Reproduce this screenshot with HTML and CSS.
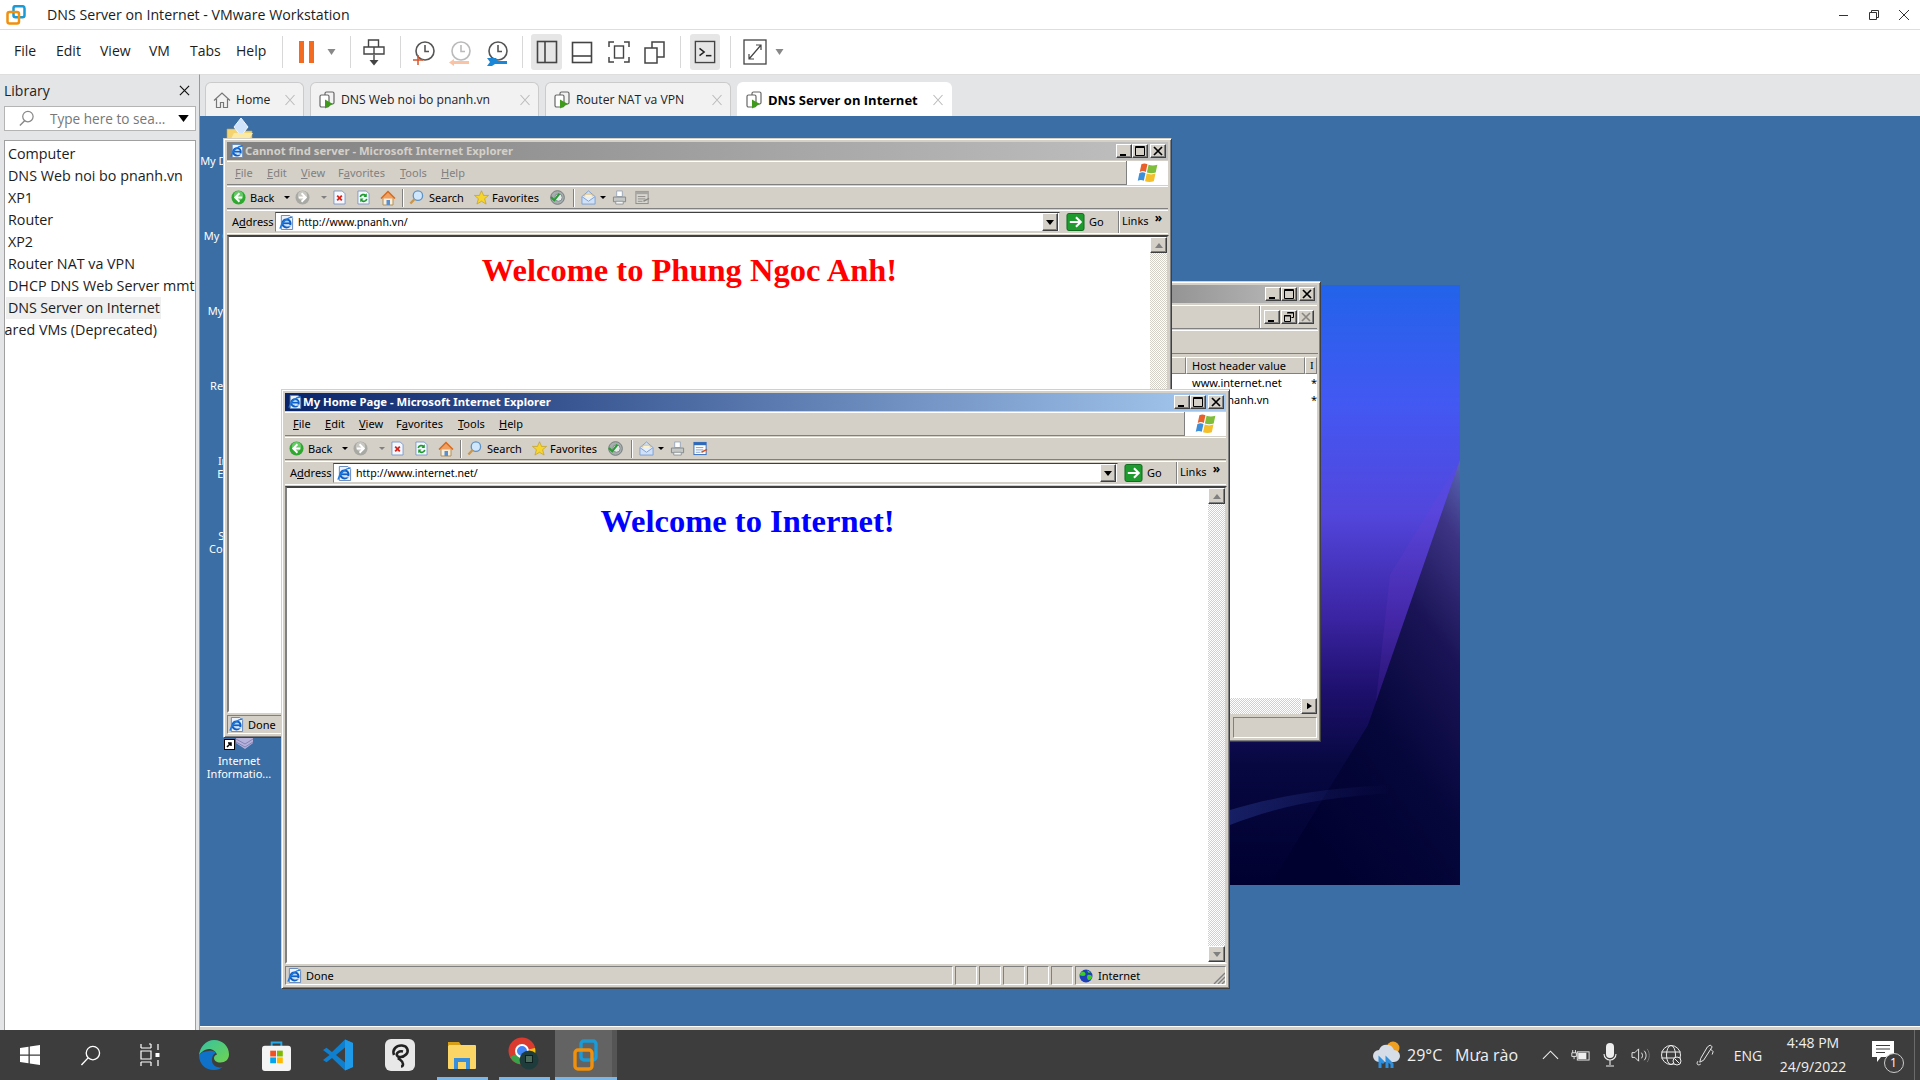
FILE: index.html
```
<!DOCTYPE html>
<html lang="en">
<head>
<meta charset="utf-8">
<title>DNS Server on Internet - VMware Workstation</title>
<link rel="stylesheet" href="styles.css">
</head>
<body>
<svg class="defs" width="0" height="0" aria-hidden="true">
  <defs>
    <symbol id="ie" viewBox="0 0 16 16"><path d="M2.500 .5h9l3 3v12h-12z" fill="#eef3fb" stroke="#5f83b5"/><circle cx="8" cy="9" r="4.300" fill="#bcd8f7" stroke="#0f5fc4" stroke-width="2.200"/><path d="M4 8.800h8" stroke="#0f5fc4" stroke-width="1.700"/><path d="M8 11.500h5" stroke="#eef3fb" stroke-width="1.200"/><path d="M1 14.500C2.500 8 9 2.500 14.500 2" fill="none" stroke="#1f78dc" stroke-width="1.500"/></symbol>
    <symbol id="back" viewBox="0 0 16 16"><circle cx="8" cy="8" r="7.500" fill="#2fa82f"/><circle cx="8" cy="6" r="5" fill="#8fe08f" opacity=".6"/><path d="M9 3.500 4.500 8 9 12.500M5 8h7" fill="none" stroke="#fff" stroke-width="2"/></symbol>
    <symbol id="fwd" viewBox="0 0 16 16"><circle cx="8" cy="8" r="7.500" fill="#a9a9a4"/><circle cx="8" cy="6" r="5" fill="#dedcd6" opacity=".6"/><path d="M7 3.500 11.500 8 7 12.500M11 8H4" fill="none" stroke="#fff" stroke-width="2"/></symbol>
    <symbol id="stop" viewBox="0 0 14 16"><path d="M1 1h9l3 3v11H1z" fill="#f5f8ff" stroke="#7d97c4"/><path d="M4.500 6l5 5m0-5-5 5" stroke="#d8261c" stroke-width="2"/></symbol>
    <symbol id="refresh" viewBox="0 0 14 16"><path d="M1 1h9l3 3v11H1z" fill="#f5f8ff" stroke="#7d97c4"/><path d="M3.500 7.500a3.500 3.500 0 0 1 6-1.500M10.500 9.500a3.500 3.500 0 0 1-6 1.500" fill="none" stroke="#1c9a2e" stroke-width="1.800"/><path d="M10.500 3.500v4h-3.500zM3.500 13v-4h3.500z" fill="#1c9a2e"/></symbol>
    <symbol id="home" viewBox="0 0 16 16"><path d="M3 8v7h10V8" fill="#f8eeda" stroke="#b09060"/><path d="M1 8.500 8 1.500l7 7" fill="#f0a060" stroke="#d56b1f" stroke-width="1.500"/><rect x="6.500" y="10" width="3.500" height="5" fill="#5a8fd0"/></symbol>
    <symbol id="search" viewBox="0 0 16 16"><circle cx="9.500" cy="6" r="5" fill="#cfe6fb" stroke="#5f93c4" stroke-width="1.400"/><path d="M6 9.500 1.500 14.500" stroke="#c9964a" stroke-width="2.400"/></symbol>
    <symbol id="star" viewBox="0 0 16 16"><path d="M8 .8l2.200 5h5.300l-4.200 3.500 1.600 5.700L8 12l-4.900 3 1.600-5.700L.5 5.800h5.300z" fill="#f7d52f" stroke="#bf9a20" stroke-width=".7"/></symbol>
    <symbol id="media" viewBox="0 0 16 16"><circle cx="8" cy="8" r="7.300" fill="#a8adad" stroke="#6f7a7a"/><circle cx="9" cy="8" r="4" fill="#e6eaea" stroke="#7c8a8a"/><path d="M1 7.500 4.500 11 10 4" fill="none" stroke="#2a9a36" stroke-width="2.200"/></symbol>
    <symbol id="mail" viewBox="0 0 16 16"><path d="M1 7l7-6 7 6v8H1z" fill="#cfe0f7" stroke="#7d9fd0"/><path d="M4 4.500h8V9H4z" fill="#fff4c8" stroke="#d0a860" stroke-width=".6"/><path d="M1 7l7 5 7-5" fill="#e6effc" stroke="#7d9fd0"/></symbol>
    <symbol id="print" viewBox="0 0 16 16"><path d="M5 1h6v6H5z" fill="#fff" stroke="#9aa8bb"/><path d="M1.500 7.500h13v5h-13z" fill="#c6c8c8" stroke="#808688"/><path d="M4 12h8v3H4z" fill="#f4f4f4" stroke="#909698"/></symbol>
    <symbol id="edit" viewBox="0 0 16 16"><rect x="1" y="1.500" width="13" height="13" fill="#fff" stroke="#2f68b8"/><path d="M1 1.500h13V4.500H1z" fill="#2f68b8"/><path d="M3 7h8M3 9.500h8M3 12h5" stroke="#7d9fd0"/><path d="M9 12l6-3" stroke="#d8501c" stroke-width="1.500"/></symbol>
    <symbol id="editoff" viewBox="0 0 16 16"><rect x="1" y="1.500" width="13" height="13" fill="#d8d6d0" stroke="#8c8a86"/><path d="M1 1.500h13V4.500H1z" fill="#a8a6a2"/><path d="M3 7h8M3 9.500h8M3 12h5" stroke="#8c8a86"/><path d="M9 12l6-3" stroke="#8c8a86" stroke-width="1.500"/></symbol>
    <symbol id="go" viewBox="0 0 19 19"><rect x=".5" y=".5" width="18" height="18" rx="2" fill="#1f9a2f" stroke="#0c6a18"/><path d="M3.500 9.500h11M10 4.500l5 5-5 5" fill="none" stroke="#fff" stroke-width="2.200"/></symbol>
    <symbol id="flag" viewBox="0 0 20 18"><path d="M4 1c2-1 3.500-1 5.500 0L8 8C6 7 4.500 7 2.500 8z" fill="#e8602a"/><path d="M10.500 1.500c2.500 1 5 1 8 0L17 8.500c-2.500 1-5.500 1-8 0z" fill="#7fbe3a"/><path d="M2.200 9c2-1 3.500-1 5.500 0L6.200 16c-2-1-3.500-1-5.500 0z" fill="#3d8fdc"/><path d="M8.800 9.500c2.500 1 5.500 1 8 0l-1.500 7c-2.500 1-5.500 1-8 0z" fill="#f4bf2a"/></symbol>
    <symbol id="wmin" viewBox="0 0 10 10"><path d="M1 8h6v2H1z" fill="#000"/></symbol>
    <symbol id="wmax" viewBox="0 0 10 10"><path d="M.5 1.500h9v8h-9zM.5 .5h9v1h-9z" fill="none" stroke="#000"/></symbol>
    <symbol id="wclose" viewBox="0 0 10 10"><path d="M1 1l8 8m0-8-8 8" stroke="#000" stroke-width="1.700"/></symbol>
    <symbol id="wrestore" viewBox="0 0 10 10"><path d="M3.500 .5h6v5h-2M.5 3.500h6v6h-6z" fill="none" stroke="#000"/><path d="M3 1h7M0 4h7" stroke="#000"/></symbol>
    <symbol id="vmtab" viewBox="0 0 18 18"><rect x="7" y="1" width="9" height="12" rx="1.500" fill="none" stroke="#666" stroke-width="1.200"/><rect x="2" y="4" width="9" height="12" rx="1.500" fill="#fff" stroke="#666" stroke-width="1.200"/><path d="M7 8.500l8 4.500-8 4.500z" fill="#3f9a1c"/></symbol>
    <symbol id="tabx" viewBox="0 0 12 12"><path d="M1.500 1 10.500 11m0-10L1.500 11" stroke="currentColor" stroke-width="1.100" fill="none"/></symbol>
    <symbol id="clock" viewBox="0 0 24 24"><circle cx="13" cy="11" r="9" fill="none" stroke="#555" stroke-width="1.600"/><path d="M13 5v6.500h4" fill="none" stroke="#555" stroke-width="1.600"/></symbol>
    <symbol id="earth" viewBox="0 0 14 14"><circle cx="7" cy="7" r="6.500" fill="#1f3fb8"/><path d="M3 2.500c2 0 4 1 3.500 3S3 7 1.500 6.500 2 3 3 2.500zM9 6c2-.5 4 .5 4 2s-2 3.500-3.500 3S7.500 6.500 9 6z" fill="#3ecb2c"/><path d="M8 1.500c1.500 0 3 1 3.500 2L9.500 4z" fill="#3ecb2c"/></symbol>
  </defs>
</svg>

<div class="app">
  <header class="titlebar">
    <svg class="vmlogo" viewBox="0 0 20 20" width="20" height="20"><rect x="7.500" y="1.200" width="11" height="11" rx="2" fill="none" stroke="#1b9ad6" stroke-width="2.500"/><rect x="1.500" y="7" width="11.500" height="11.500" rx="2" fill="none" stroke="#f0900c" stroke-width="2.500"/></svg>
    <span class="titletext">DNS Server on Internet - VMware Workstation</span>
    <div class="wincontrols">
      <svg viewBox="0 0 12 12" width="12" height="12"><path d="M1 6.500h9" stroke="#333"/></svg>
      <svg viewBox="0 0 12 12" width="12" height="12"><path d="M1.500 3.500h7v7h-7zM3.500 3.500v-2h7v7h-2" fill="none" stroke="#333"/></svg>
      <svg viewBox="0 0 12 12" width="12" height="12"><path d="M1 1l10 10m0-10L1 11" stroke="#333"/></svg>
    </div>
  </header>

  <nav class="menubar">
    <div class="mainmenu"><span>File</span><span>Edit</span><span>View</span><span>VM</span><span>Tabs</span><span>Help</span></div>
    <div class="mainbar">
      <i class="vsep"></i>
      <svg viewBox="0 0 16 22" width="16" height="22"><rect width="5" height="22" fill="#f26b21"/><rect x="10" width="5" height="22" fill="#f26b21"/></svg>
      <svg class="drop" viewBox="0 0 8 6" width="9" height="6"><path d="M0 0h8L4 6z" fill="#888"/></svg>
      <i class="vsep"></i>
      <svg viewBox="0 0 24 28" width="24" height="28"><path d="M6.500 2h10v7h-10zM2 9h10v7H2zM12 9h10v7H12z" fill="none" stroke="#444" stroke-width="1.400"/><path d="M12 17v7" stroke="#444" stroke-width="1.400"/><path d="M7.500 22h9L12 27.500z" fill="#444"/></svg>
      <i class="vsep"></i>
      <svg viewBox="0 0 24 28" width="24" height="28"><use href="#clock"/><path d="M1 22h10M6 17v10" stroke="#d9542a" stroke-width="1.500"/></svg>
      <svg viewBox="0 0 24 28" width="24" height="28" class="dim"><use href="#clock"/><path d="M3 23h18v3H3z" fill="#f26b21"/><path d="M1 24.500 6 21v7z" fill="#f26b21"/></svg>
      <svg viewBox="0 0 24 28" width="24" height="28"><use href="#clock"/><path d="M2 20h9l2 3h9v3H10l-3 2H2l3-4z" fill="#1b86d6"/></svg>
      <i class="vsep"></i>
      <span class="selbox"><svg viewBox="0 0 24 24" width="24" height="24"><rect x="2.500" y="1.500" width="19" height="21" fill="none" stroke="#444" stroke-width="1.600"/><path d="M10 1.500v21" stroke="#444" stroke-width="1.600"/></svg></span>
      <svg viewBox="0 0 24 24" width="24" height="24"><rect x="2.500" y="2.500" width="19" height="20" fill="none" stroke="#444" stroke-width="1.600"/><path d="M2.500 16h19" stroke="#444" stroke-width="1.600"/></svg>
      <svg viewBox="0 0 24 24" width="24" height="24"><path d="M2 7V2h5M17 2h5v5M2 17v5h5M17 22h5v-5" fill="none" stroke="#444" stroke-width="1.500"/><rect x="7.500" y="6" width="9" height="12" fill="none" stroke="#444" stroke-width="1.400"/></svg>
      <svg viewBox="0 0 24 24" width="24" height="24"><rect x="2" y="8" width="12" height="15" fill="none" stroke="#444" stroke-width="1.500"/><path d="M9 8V2h12v15h-7" fill="none" stroke="#444" stroke-width="1.500"/></svg>
      <i class="vsep"></i>
      <span class="selbox term"><svg viewBox="0 0 24 26" width="22" height="26"><rect x="1.500" y="1.500" width="21" height="23" fill="none" stroke="#444" stroke-width="1.500"/><path d="M6 9l5 4-5 4" fill="none" stroke="#222" stroke-width="1.700"/><path d="M13 17h6" stroke="#222" stroke-width="1.700"/></svg></span>
      <i class="vsep"></i>
      <svg viewBox="0 0 24 26" width="24" height="26"><rect x="1" y="1" width="22" height="24" fill="none" stroke="#444" stroke-width="1.300"/><path d="M6 20 18 6M13 6h5v5M6 15v5h5" fill="none" stroke="#444" stroke-width="1.200"/></svg>
      <svg class="drop" viewBox="0 0 8 6" width="9" height="6"><path d="M0 0h8L4 6z" fill="#888"/></svg>
    </div>
  </nav>

  <div class="main">
    <aside class="library">
      <div class="libhead"><span>Library</span><svg viewBox="0 0 12 12" width="11" height="11"><path d="M1 1l10 10m0-10L1 11" stroke="#111" stroke-width="1.300"/></svg></div>
      <div class="libsearch">
        <svg viewBox="0 0 18 18" width="17" height="17"><circle cx="10.500" cy="7" r="5.500" fill="none" stroke="#888" stroke-width="1.300"/><path d="M7 11.500 2 16.500" stroke="#888" stroke-width="1.500"/></svg>
        <span class="placeholder">Type here to sea...</span>
        <svg class="libdrop" viewBox="0 0 12 8" width="11" height="7"><path d="M0 0h12L6 8z" fill="#000"/></svg>
      </div>
      <ul class="tree">
        <li>Computer</li>
        <li>DNS Web noi bo pnanh.vn</li>
        <li>XP1</li>
        <li>Router</li>
        <li>XP2</li>
        <li>Router NAT va VPN</li>
        <li>DHCP DNS Web Server mmt</li>
        <li class="selected"><span>DNS Server on Internet</span></li>
        <li class="clipped">Shared VMs (Deprecated)</li>
      </ul>
    </aside>

    <section class="vmpane">
      <div class="tabs">
        <div class="tab t-home"><svg viewBox="0 0 18 18" width="18" height="18"><path d="M1 9.500 9 2l8 7.500M3.500 8v8.500h4v-5h3v5h4V8" fill="none" stroke="#777" stroke-width="1.200"/></svg><span>Home</span><svg class="tabx" width="12" height="12"><use href="#tabx"/></svg></div>
        <div class="tab t-web"><svg width="18" height="18"><use href="#vmtab"/></svg><span>DNS Web noi bo pnanh.vn</span><svg class="tabx" width="12" height="12"><use href="#tabx"/></svg></div>
        <div class="tab t-router"><svg width="18" height="18"><use href="#vmtab"/></svg><span>Router NAT va VPN</span><svg class="tabx" width="12" height="12"><use href="#tabx"/></svg></div>
        <div class="tab t-dns active"><svg width="18" height="18"><use href="#vmtab"/></svg><span>DNS Server on Internet</span><svg class="tabx" width="12" height="12"><use href="#tabx"/></svg></div>
      </div>

      <div class="screen">
        <div class="desktop-icons">
          <div class="dicon"><div class="di-img"><svg class="di-docs" viewBox="0 0 28 21" width="28" height="21"><path d="M1 11h9l2 2h14v8H1z" fill="#f4d470" stroke="#c8a040" stroke-width=".6"/><path d="M15 0l7 9-7 9-7-9z" fill="#cfe4fb" stroke="#eef6ff"/><path d="M5 21l3-6h19l-4 6z" fill="#fbe9a6"/></svg></div><span>My Documents</span></div>
          <div class="dicon"><div class="di-img"></div><span>My Computer</span></div>
          <div class="dicon"><div class="di-img"></div><span>My Network<br>Places</span></div>
          <div class="dicon"><div class="di-img"></div><span>Recycle Bin</span></div>
          <div class="dicon"><div class="di-img"></div><span>Internet<br>Explorer</span></div>
          <div class="dicon"><div class="di-img"></div><span>Security<br>Configura...</span></div>
          <div class="dicon"></div>
          <div class="dicon"></div>
          <div class="dicon"><div class="di-img di-iis"><svg viewBox="0 0 30 14" width="30" height="14"><path d="M12 0h17v7l-8 6-9-6z" fill="#b5b3dc"/><path d="M12 3l9 5 8-5M12 6l9 5 8-5" fill="none" stroke="#8583b5"/><rect x=".5" y="3.500" width="10" height="10" fill="#fff" stroke="#000"/><path d="M3 11l4-4M4 7h3v3" fill="none" stroke="#000" stroke-width="1.500"/></svg></div><span>Internet<br>Informatio...</span></div>
        </div>

        <div class="wallpaper">
          <svg viewBox="0 0 360 600" width="360" height="600" preserveAspectRatio="none">
            <defs>
              <linearGradient id="wpbase" x1="0" y1="0" x2="0" y2="1"><stop offset="0" stop-color="#2263ea"/><stop offset=".2" stop-color="#4358f2"/><stop offset=".38" stop-color="#5246dc"/><stop offset=".55" stop-color="#3c25a4"/><stop offset=".68" stop-color="#1c0f6b"/><stop offset=".8" stop-color="#070840"/><stop offset="1" stop-color="#000030"/></linearGradient>
              <linearGradient id="wpwedge" x1="1" y1="0" x2=".4" y2="1"><stop offset="0" stop-color="#5868b4"/><stop offset=".14" stop-color="#3d3484"/><stop offset=".36" stop-color="#1a1456"/><stop offset=".65" stop-color="#05063a"/><stop offset="1" stop-color="#010130"/></linearGradient>
              <linearGradient id="wpband" x1="0" y1="0" x2="1" y2="0"><stop offset="0" stop-color="#2a3a90"/><stop offset="1" stop-color="#2a3a90" stop-opacity="0"/></linearGradient>
            </defs>
            <rect width="360" height="600" fill="url(#wpbase)"/>
            <path d="M290 290 360 175V300L270 470z" fill="#8a45d8" opacity=".12"/>
            <path d="M360 175V600H170L268 440z" fill="url(#wpwedge)"/>
            <path d="M130 525C180 510 230 503 290 500V508C230 512 180 520 130 540z" fill="url(#wpband)" opacity=".5"/>
          </svg>
        </div>

        <!-- IIS manager window, mostly hidden -->
        <div class="xpwin iis">
          <div class="wintitle inactive"><span class="tt-text"></span><div class="wbtns"><span class="wbtn"><svg width="10" height="10"><use href="#wmin"/></svg></span><span class="wbtn"><svg width="10" height="10"><use href="#wmax"/></svg></span><span class="wbtn"><svg width="10" height="10"><use href="#wclose"/></svg></span></div></div>
          <div class="iis-menu bar"><div class="fill"></div><div class="mdibtns"><span class="wbtn"><svg width="10" height="10"><use href="#wmin"/></svg></span><span class="wbtn"><svg width="10" height="10"><use href="#wrestore"/></svg></span><span class="wbtn off"><svg width="10" height="10"><use href="#wclose"/></svg></span></div></div>
          <div class="iis-tool bar"></div>
          <div class="iis-list">
            <div class="listhead"><span class="lh c1"></span><span class="lh c2">Host header value</span><span class="lh c3">I</span></div>
            <div class="listrow"><span class="c1"></span><span class="c2">www.internet.net</span><span class="c3">*</span></div>
            <div class="listrow"><span class="c1"></span><span class="c2">www.pnanh.vn</span><span class="c3">*</span></div>
            <div class="listfill"></div>
            <div class="hscroll"><span class="arrowbtn"><svg viewBox="0 0 6 8" width="5" height="8"><path d="M0 0l6 4-6 4z" fill="#000"/></svg></span></div>
          </div>
          <div class="iis-status"><span class="sunken"></span></div>
        </div>

        <!-- Back browser -->
        <div class="xpwin ie w-back">
          <div class="wintitle inactive"><svg class="tt-icon" width="14" height="14"><use href="#ie"/></svg><span class="tt-text">Cannot find server - Microsoft Internet Explorer</span><div class="wbtns"><span class="wbtn"><svg width="10" height="10"><use href="#wmin"/></svg></span><span class="wbtn"><svg width="10" height="10"><use href="#wmax"/></svg></span><span class="wbtn"><svg width="10" height="10"><use href="#wclose"/></svg></span></div></div>
          <div class="iemenu bar disabled"><div class="iemenu-items"><span><u>F</u>ile</span><span><u>E</u>dit</span><span><u>V</u>iew</span><span>F<u>a</u>vorites</span><span><u>T</u>ools</span><span><u>H</u>elp</span></div><div class="brand"><svg width="22" height="20"><use href="#flag"/></svg></div></div>
          <div class="ietool bar">
            <svg width="15" height="15"><use href="#back"/></svg><span>Back</span><i class="tri"></i><svg width="15" height="15"><use href="#fwd"/></svg><i class="tri off"></i><svg width="13" height="15"><use href="#stop"/></svg><svg width="13" height="15"><use href="#refresh"/></svg><svg width="16" height="16"><use href="#home"/></svg><i class="tsep"></i><svg width="15" height="15"><use href="#search"/></svg><span>Search</span><svg width="15" height="15"><use href="#star"/></svg><span>Favorites</span><svg width="15" height="15"><use href="#media"/></svg><i class="tsep"></i><svg width="15" height="15"><use href="#mail"/></svg><i class="tri"></i><svg width="15" height="15"><use href="#print"/></svg><svg width="15" height="15"><use href="#editoff"/></svg>
          </div>
          <div class="ieaddr">
            <span class="addrlabel">A<u>d</u>dress</span>
            <div class="addrfield"><svg width="15" height="15"><use href="#ie"/></svg><span class="url">http://www.pnanh.vn/</span><span class="arrowbtn dd"><svg viewBox="0 0 8 5" width="8" height="5"><path d="M0 0h8L4 5z" fill="#000"/></svg></span></div>
            <div class="gobox"><svg width="19" height="18"><use href="#go"/></svg><span>Go</span></div>
            <div class="linksbox"><span>Links</span><b>»</b></div>
          </div>
          <div class="iecontent">
            <div class="page"><h1 class="red">Welcome to Phung Ngoc Anh!</h1></div>
            <div class="vscroll"><span class="arrowbtn up"><svg viewBox="0 0 8 5" width="8" height="5"><path d="M4 0l4 5H0z" fill="#808080"/></svg></span><span class="arrowbtn down"><svg viewBox="0 0 8 5" width="8" height="5"><path d="M0 0h8L4 5z" fill="#808080"/></svg></span></div>
          </div>
          <div class="iestatus"><div class="st-main"><svg width="15" height="15"><use href="#ie"/></svg><span>Done</span></div><i class="st"></i><i class="st"></i><i class="st"></i><i class="st"></i><i class="st"></i><div class="st-zone"><svg width="14" height="14"><use href="#earth"/></svg><span>Internet</span></div></div>
        </div>

        <!-- Front browser -->
        <div class="xpwin ie w-front">
          <div class="wintitle"><svg class="tt-icon" width="14" height="14"><use href="#ie"/></svg><span class="tt-text">My Home Page - Microsoft Internet Explorer</span><div class="wbtns"><span class="wbtn"><svg width="10" height="10"><use href="#wmin"/></svg></span><span class="wbtn"><svg width="10" height="10"><use href="#wmax"/></svg></span><span class="wbtn"><svg width="10" height="10"><use href="#wclose"/></svg></span></div></div>
          <div class="iemenu bar"><div class="iemenu-items"><span><u>F</u>ile</span><span><u>E</u>dit</span><span><u>V</u>iew</span><span>F<u>a</u>vorites</span><span><u>T</u>ools</span><span><u>H</u>elp</span></div><div class="brand"><svg width="22" height="20"><use href="#flag"/></svg></div></div>
          <div class="ietool bar">
            <svg width="15" height="15"><use href="#back"/></svg><span>Back</span><i class="tri"></i><svg width="15" height="15"><use href="#fwd"/></svg><i class="tri off"></i><svg width="13" height="15"><use href="#stop"/></svg><svg width="13" height="15"><use href="#refresh"/></svg><svg width="16" height="16"><use href="#home"/></svg><i class="tsep"></i><svg width="15" height="15"><use href="#search"/></svg><span>Search</span><svg width="15" height="15"><use href="#star"/></svg><span>Favorites</span><svg width="15" height="15"><use href="#media"/></svg><i class="tsep"></i><svg width="15" height="15"><use href="#mail"/></svg><i class="tri"></i><svg width="15" height="15"><use href="#print"/></svg><svg width="15" height="15"><use href="#edit"/></svg>
          </div>
          <div class="ieaddr">
            <span class="addrlabel">A<u>d</u>dress</span>
            <div class="addrfield"><svg width="15" height="15"><use href="#ie"/></svg><span class="url">http://www.internet.net/</span><span class="arrowbtn dd"><svg viewBox="0 0 8 5" width="8" height="5"><path d="M0 0h8L4 5z" fill="#000"/></svg></span></div>
            <div class="gobox"><svg width="19" height="18"><use href="#go"/></svg><span>Go</span></div>
            <div class="linksbox"><span>Links</span><b>»</b></div>
          </div>
          <div class="iecontent">
            <div class="page"><h1 class="blue">Welcome to Internet!</h1></div>
            <div class="vscroll"><span class="arrowbtn up"><svg viewBox="0 0 8 5" width="8" height="5"><path d="M4 0l4 5H0z" fill="#808080"/></svg></span><span class="arrowbtn down"><svg viewBox="0 0 8 5" width="8" height="5"><path d="M0 0h8L4 5z" fill="#808080"/></svg></span></div>
          </div>
          <div class="iestatus"><div class="st-main"><svg width="15" height="15"><use href="#ie"/></svg><span>Done</span></div><i class="st"></i><i class="st"></i><i class="st"></i><i class="st"></i><i class="st"></i><div class="st-zone"><svg width="14" height="14"><use href="#earth"/></svg><span>Internet</span><svg class="grip" viewBox="0 0 12 12" width="12" height="12"><path d="M12 1 1 12M12 5l-7 7M12 9l-3 3" stroke="#808080" stroke-width="1.400"/></svg></div></div>
        </div>

        <div class="guestbar"></div>
      </div>
    </section>
  </div>

  <footer class="taskbar">
    <div class="tb-left">
      <div class="tcell"><svg viewBox="0 0 20 20" width="20" height="20"><path d="M0 3l8.500-1.300v7.800H0zM9.800 1.500 20 0v9.500H9.800zM0 10.800h8.500v7.500L0 17zM9.800 10.800H20V20L9.800 18.500z" fill="#fff"/></svg></div>
      <div class="tcell"><svg viewBox="0 0 22 22" width="21" height="21"><circle cx="13.500" cy="8.500" r="7" fill="none" stroke="#fff" stroke-width="1.400"/><path d="M8.500 13.500 1.500 21" stroke="#fff" stroke-width="1.500"/></svg></div>
      <div class="tcell"><svg viewBox="0 0 20 24" width="20" height="24"><path d="M1 5V1M9 1h2M11 1v4M1 5h10M1 8h10v8H1zM1 19h10M1 19v4M11 19v4M18 1v6M18 17v6" fill="none" stroke="#fff" stroke-width="1.200"/><rect x="15.500" y="10" width="4" height="4" fill="#fff"/></svg></div>
      <div class="tapp first"><svg viewBox="0 0 30 30" width="30" height="30"><defs><linearGradient id="edg1" x1="0" y1="0" x2="1" y2="1"><stop offset="0" stop-color="#35c1a3"/><stop offset="1" stop-color="#6fd44e"/></linearGradient></defs><path d="M15 0C24 0 30 6.500 30 14.500c0 5-4 8-8.500 8-4 0-6.500-2-6.500-4.500 0-2 1.500-3 3-3.500-1-3-4-5.500-8-5.500C5 9.500 1 12.500 0 16 .5 7 7 0 15 0z" fill="url(#edg1)"/><path d="M0 15C0 24 6.500 30 15 30c3.500 0 6.500-1 8.500-3-4.500 1.500-10-1-10.500-6-.5-4 1.500-7 4-8.500-1.500-1-4-2-7-1.500C5 11.500 1.500 12.500 0 15z" fill="#0f72c8"/></svg></div>
      <div class="tapp"><svg viewBox="0 0 30 32" width="29" height="31"><path d="M10 7V2.500h10V7" fill="none" stroke="#25a9e8" stroke-width="2"/><rect y="6" width="30" height="26" rx="3" fill="#f4f4f4"/><rect x="8.500" y="11" width="6" height="6" fill="#f25022"/><rect x="15.500" y="11" width="6" height="6" fill="#7fba00"/><rect x="8.500" y="18" width="6" height="6" fill="#00a4ef"/><rect x="15.500" y="18" width="6" height="6" fill="#ffb900"/></svg></div>
      <div class="tapp"><svg viewBox="0 0 30 32" width="30" height="32"><path d="M22 .5 30 4v24l-8 3.500L9 19l-5.500 4.200L0 21l6.500-5L0 11l3.500-2.200L9 13z" fill="#0f7fcf"/><path d="M22 .5 30 4v24l-8 3.500z" fill="#1e9ae8"/><path d="M22 8.500 13 16l9 7.500z" fill="#3f3f3f"/></svg></div>
      <div class="tapp"><svg viewBox="0 0 30 32" width="30" height="32"><rect width="30" height="32" rx="6" fill="#e8e8e8"/><path d="M9 16c-2-5 2-10 8-9.500s7 6 4 9-8 3.500-9 1 2-5 6-4M13 19c2 2 5 3 5 6 0 2-1 2.500-2 2.500" fill="none" stroke="#222" stroke-width="2.600"/></svg></div>
      <div class="tapp"><svg viewBox="0 0 28 30" width="28" height="30"><path d="M0 2h11l2 3H0z" fill="#d69e16"/><rect y="5" width="28" height="24" rx="1" fill="#fbd666"/><path d="M6 29v-11h16v11h-4v-7h-8v7z" fill="#3a8fdc"/></svg></div>
      <div class="tapp"><svg viewBox="0 0 32 36" width="32" height="36"><circle cx="14" cy="14" r="13.500" fill="#db3a2e"/><path d="M14 14 2 20a13.500 13.500 0 0 0 15 7z" fill="#3aa24a"/><path d="M14 14l3 13a13.500 13.500 0 0 0 10-16z" fill="#f4c20d"/><circle cx="14" cy="14" r="6" fill="#4285f4" stroke="#fff" stroke-width="2"/><circle cx="21" cy="23" r="9.500" fill="#1f3c3c"/><rect x="17.500" y="18.500" width="7" height="7" fill="#4c6a5a" stroke="#0c1e1e"/></svg></div>
      <div class="tapp vm"><svg viewBox="0 0 26 32" width="26" height="32"><rect x="8" y="2" width="15" height="19" rx="3" fill="none" stroke="#1b9ad6" stroke-width="3.400"/><rect x="2" y="11" width="17" height="19" rx="3" fill="none" stroke="#f0900c" stroke-width="3.400"/></svg></div>
    </div>
    <div class="tray">
      <svg viewBox="0 0 28 30" width="28" height="30"><circle cx="20" cy="8" r="6.500" fill="#f0a020"/><path d="M6 22a6 6 0 0 1 0-12 8 8 0 0 1 15 0 6 6 0 0 1 0 12z" fill="#d6dde6"/><path d="M7 28v-9l4 4M14 28v-9l5 5v4" fill="none" stroke="#2f90e0" stroke-width="3"/></svg>
      <span>29°C</span>
      <span>Mưa rào</span>
      <svg viewBox="0 0 18 10" width="17" height="10"><path d="M1 9l8-8 8 8" fill="none" stroke="#eee" stroke-width="1.200"/></svg>
      <svg viewBox="0 0 22 14" width="20" height="13"><path d="M3 1v3M6 1v3M2 4h5v4H2zM4.500 8v3" fill="none" stroke="#eee"/><rect x="8" y="3" width="13" height="9" fill="none" stroke="#eee"/><rect x="9" y="4" width="9" height="7" fill="#eee"/></svg>
      <svg viewBox="0 0 14 24" width="14" height="24"><rect x="3" y="0" width="8" height="15" rx="4" fill="#eee"/><path d="M1 11a6 6 0 0 0 12 0M7 17v5M3 23h8" fill="none" stroke="#eee" stroke-width="1.100"/></svg>
      <svg viewBox="0 0 20 18" width="19" height="17"><path d="M1 6h3l4-4v13l-4-4H1z" fill="none" stroke="#eee"/><path d="M11 6c1.500 2 1.500 4 0 6M14 4c2.500 3 2.500 7 0 10" fill="none" stroke="#eee"/><path d="M17 2c3 4 3 10 0 14" fill="none" stroke="#777"/></svg>
      <svg viewBox="0 0 22 22" width="22" height="22"><circle cx="11" cy="11" r="9.500" fill="none" stroke="#eee"/><ellipse cx="11" cy="11" rx="4.500" ry="9.500" fill="none" stroke="#eee"/><path d="M1.500 8h19M1.500 14h19" stroke="#eee"/><circle cx="17" cy="17" r="4" fill="#3d3d3d" stroke="#eee"/><path d="M14.500 14.500l5 5" stroke="#eee"/></svg>
      <svg viewBox="0 0 22 24" width="21" height="23"><path d="M13 3l3-2 2 2-9 14-4 2 1-4zM16 5l3 3-1 3" fill="none" stroke="#eee"/><path d="M6 21C3 23 1 21 3 18" fill="none" stroke="#eee"/></svg>
      <span class="eng">ENG</span>
      <div class="clock"><span>4:48 PM</span><span>24/9/2022</span></div>
      <div class="notif"><svg viewBox="0 0 24 22" width="24" height="22"><path d="M0 0h22v16H9l-4 5v-5H0z" fill="#fff"/><path d="M4 4.500h14M4 8h14M4 11.500h9" stroke="#3d3d3d" stroke-width="1.200"/></svg><span class="badge">1</span></div>
      <i class="showdesk"></i>
    </div>
  </footer>
</div>
</body>
</html>
```

FILE: styles.css
```
* { box-sizing: border-box; }
html, body { margin: 0; padding: 0; }
body { background: #fff; overflow: hidden; font-family: "Open Sans", "Noto Sans", sans-serif; }
.defs { position: absolute; }
svg { display: block; flex: none; }
.app { width: 1920px; height: 1080px; display: flex; flex-direction: column; overflow: hidden; }

/* Host title and menu */
.titlebar { height: 30px; display: flex; align-items: center; background: #fff; border-bottom: 1px solid #dedede; padding-left: 6px; }
.titletext { margin-left: 21px; font-size: 14.2px; color: #1c1c1c; }
.wincontrols { margin-left: auto; display: grid; grid-template-columns: 12px 12px 12px; column-gap: 18px; padding-right: 10px; }
.menubar { height: 44px; display: flex; align-items: center; background: #fff; padding-left: 14px; }
.mainmenu { width: 268px; margin-top: -3px; display: grid; grid-template-columns: 42px 44px 49px 41px 46px 46px; font-size: 14px; color: #1c1c1c; }
.mainbar { display: grid; align-items: center; margin-top: -1px; grid-template-columns: 17px 28px 23px 12px 38px 12px 36px 37px 37px 9px 39px 37px 36px 37px 10px 40px 13px 32px 12px; }
.vsep { display: block; width: 1px; height: 32px; background: #d8d8d8; }
.drop { margin: 0; }
.dim { opacity: .4; }
.selbox { width: 31px; height: 36px; display: flex; align-items: center; justify-content: center; background: #e6e6e6; border-radius: 3px; }
.selbox.term { width: 30px; }

.main { flex: 1; display: flex; min-height: 0; }

/* Library */
.library { width: 200px; background: #e4e5e7; border-right: 1px solid #999; display: flex; flex-direction: column; padding: 0 3px 0 4px; border-top: 1px solid #dedede; }
.libhead { height: 31px; flex: none; display: flex; align-items: center; justify-content: space-between; font-size: 14px; color: #222; padding: 0 6px 0 0; }
.libsearch { height: 25px; flex: none; display: flex; align-items: center; background: #fff; border: 1px solid #b4b4b4; padding: 0 6px 0 13px; }
.placeholder { margin-left: 15px; font-size: 13.6px; color: #777; white-space: nowrap; flex: 1; }
.tree { list-style: none; margin: 9px 0 0; padding: 2px 0 0; flex: 1; background: #fff; border: 1px solid #a0a0a0; border-bottom: 0; overflow: hidden; font-size: 14.3px; color: #1c1c1c; white-space: nowrap; }
.tree li { height: 22px; line-height: 22px; padding-left: 3px; }
.tree .selected span { display: inline-block; background: #efefef; margin-left: -2px; padding: 0 2px; width: 155px; letter-spacing: -.1px; }
.tree .clipped { margin-left: -20px; }

/* Tabs */
.vmpane { flex: 1; min-width: 0; display: flex; flex-direction: column; }
.tabs { height: 42px; flex: none; display: flex; align-items: flex-end; background: #e4e5e7; padding-left: 5px; border-top: 1px solid #dedede; }
.tab { height: 34px; display: flex; align-items: center; padding: 0 7px; background: #f2f2f3; border: 1px solid #cbcbcb; border-bottom: 0; border-radius: 6px 6px 0 0; font-size: 12.2px; color: #222; margin-right: 6px; white-space: nowrap; }
.tab span { margin-left: 5px; }
.tabx { margin-left: auto; color: #bbb; }
.t-home { width: 99px; }
.t-web { width: 229px; }
.t-router { width: 186px; }
.t-dns { width: 215px; }
.tab.active { background: #fff; border-color: #fff; font-weight: 700; font-size: 13px; color: #000; }

/* Guest screen */
.screen { flex: 1; position: relative; background: #3a6ea5; overflow: hidden; }
.guestbar { position: absolute; left: 0; right: 0; bottom: 0; height: 4px; background: #d4d0c8; border-top: 1px solid #fff; }
.desktop-icons { position: absolute; left: 1px; top: 4px; width: 76px; display: flex; flex-direction: column; }
.dicon { height: 75px; display: flex; flex-direction: column; align-items: center; font: 11px/13px "Noto Sans", sans-serif; color: #fff; text-align: center; white-space: nowrap; }
.di-img { height: 34px; flex: none; width: 100%; }
.di-docs { margin: -2px 0 0 25px; }
.di-iis { display: flex; align-items: flex-end; padding: 0 0 4px 23px; }

.wallpaper { position: absolute; left: 900px; top: 169px; width: 360px; height: 600px; }

.xpwin { position: absolute; display: flex; flex-direction: column; background: #d4d0c8; border: 1px solid; border-color: #d4d0c8 #404040 #404040 #d4d0c8; box-shadow: inset 1px 1px #fff, inset -1px -1px #808080; padding: 3px; font: 11px/14px "Noto Sans", sans-serif; color: #000; }
.ie { width: 949px; height: 600px; }
.w-back { left: 23px; top: 22px; }
.w-front { left: 81px; top: 273px; }
.iis { left: 900px; top: 165px; width: 221px; height: 461px; }

.wintitle { height: 18px; flex: none; display: flex; align-items: center; padding: 0 2px 0 3px; margin-bottom: 1px; color: #fff; font-weight: 700; font-size: 11.3px; background: linear-gradient(90deg, #0a246a, #a6caf0); }
.wintitle.inactive { color: #d4d0c8; background: linear-gradient(90deg, #808080, #c0c0c0); }
.tt-icon { margin-right: 1px; }
.tt-text { white-space: nowrap; }
.wbtns { margin-left: auto; display: flex; }
.wbtns .wbtn:last-child { margin-left: 2px; }
.wbtn { width: 16px; height: 14px; display: flex; align-items: center; justify-content: center; background: #d4d0c8; border: 1px solid; border-color: #fff #404040 #404040 #fff; box-shadow: inset -1px -1px #808080; }
.wbtn.off svg { opacity: .35; }

.bar { border-top: 1px solid #fff; border-bottom: 1px solid #808080; margin-bottom: 1px; }
.iemenu { height: 24px; flex: none; display: flex; align-items: stretch; }
.iemenu-items { flex: 1; display: grid; align-items: center; padding-left: 8px; grid-template-columns: 32px 34px 37px 62px 41px 40px; justify-content: start; }
.iemenu.disabled .iemenu-items { color: #808080; }
.brand { width: 41px; background: #fff; border-left: 1px solid #fff; box-shadow: -1px 0 #808080; display: flex; align-items: center; justify-content: center; margin-top: -1px; margin-bottom: -1px; }
.ietool { height: 23px; flex: none; display: grid; align-items: center; padding-left: 4px; grid-template-columns: 19px 34px 11px 26px 12px 24px 23px 22px 7px 20px 45px 18px 58px 23px 8px 19px 12px 23px 20px; justify-content: start; }
.tri { display: block; width: 0; height: 0; border: 3px solid transparent; border-top: 3px solid #000; border-bottom: 0; }
.tri.off { border-top-color: #808080; }
.tsep { display: block; width: 1px; height: 18px; background: #808080; box-shadow: 1px 0 #fff; }

.ieaddr { height: 24px; flex: none; display: flex; align-items: center; margin-bottom: 1px; border-top: 1px solid #fff; border-bottom: 1px solid #fff; }
.addrlabel { width: 48px; padding-left: 5px; flex: none; }
.addrfield { flex: 1; height: 20px; display: flex; align-items: center; background: #fff; border: 1px solid; border-color: #404040 #d4d0c8 #d4d0c8 #808080; padding: 0 1px 0 3px; }
.url { margin-left: 4px; flex: 1; font-size: 10.6px; }
.arrowbtn { display: flex; align-items: center; justify-content: center; width: 16px; height: 16px; flex: none; background: #d4d0c8; border: 1px solid; border-color: #fff #404040 #404040 #fff; box-shadow: inset -1px -1px #808080; }
.arrowbtn.dd { height: 18px; }
.gobox { width: 58px; flex: none; display: flex; align-items: center; padding-left: 6px; gap: 4px; }
.linksbox { width: 50px; flex: none; display: flex; align-items: flex-start; justify-content: space-between; padding: 0 6px 0 3px; height: 22px; line-height: 20px; border-left: 1px solid #808080; box-shadow: inset 1px 0 #fff; }
.linksbox b { font-weight: 700; line-height: 13px; font-size: 12px; }

.iecontent { flex: 1; min-height: 0; display: flex; background: #fff; border: 2px solid; border-color: #404040 #d4d0c8 #fff #808080; margin-right: -1px; }
.page { flex: 1; min-width: 0; overflow: hidden; }
.page h1 { margin: 15px 0 0; text-align: center; font: 700 32.5px/37px "Liberation Serif", serif; white-space: nowrap; }
.red { color: #f00; }
.blue { color: #00f; }
.vscroll { width: 17px; flex: none; display: flex; flex-direction: column; justify-content: space-between; background: repeating-conic-gradient(#d4d0c8 0 25%, #fff 0 50%) 0 0 / 2px 2px; }
.vscroll .arrowbtn { width: 17px; height: 16px; }

.iestatus { height: 19px; flex: none; margin-top: 2px; display: flex; gap: 2px; }
.st-main, .st, .st-zone, .sunken { display: flex; align-items: center; border: 1px solid; border-color: #808080 #fff #fff #808080; }
.st-main { flex: 1; padding-left: 1px; gap: 4px; }
.st { width: 22px; flex: none; }
.st-zone { width: 151px; flex: none; padding-left: 3px; gap: 5px; }
.grip { margin-left: auto; align-self: flex-end; }

/* IIS window */
.iis-menu { height: 24px; flex: none; margin-top: 1px; display: flex; }
.fill { flex: 1; border-right: 1px solid #808080; }
.mdibtns { display: flex; align-items: center; padding: 0 3px; border-left: 1px solid #fff; gap: 1px; }
.iis-tool { height: 24px; flex: none; margin-right: -1px; }
.iis-list { flex: 1; min-height: 0; margin: 2px 0 0; display: flex; flex-direction: column; background: #fff; }
.listhead, .listrow { display: grid; grid-template-columns: 82px 119px 12px; }
.listhead { height: 17px; flex: none; }
.lh { background: #d4d0c8; border: 1px solid; border-color: #fff #808080 #808080 #fff; padding-left: 5px; line-height: 15px; overflow: hidden; }
.listrow { height: 17px; line-height: 18px; flex: none; }
.listrow .c2 { padding-left: 6px; white-space: nowrap; }
.listrow .c3 { padding-left: 6px; }
.lh.c3 { font-family: "Liberation Serif", serif; padding-left: 4px; }
.listfill { flex: 1; }
.hscroll { height: 16px; flex: none; display: flex; justify-content: flex-end; background: repeating-conic-gradient(#d4d0c8 0 25%, #fff 0 50%) 0 0 / 2px 2px; }
.iis-status { height: 21px; flex: none; margin-top: 3px; display: flex; justify-content: flex-end; }
.sunken { width: 84px; }

/* Taskbar */
.taskbar { height: 50px; flex: none; display: flex; justify-content: space-between; background: #3d3d3d; color: #f0f0f0; }
.tb-left { display: flex; }
.tcell { width: 60px; display: flex; align-items: center; justify-content: center; }
.tapp { width: 62px; display: flex; align-items: center; justify-content: center; position: relative; }
.tapp.first { margin-left: 3px; }
.tapp:nth-child(8)::after, .tapp:nth-child(9)::after, .tapp.vm::after { content: ""; position: absolute; left: 6px; right: 5px; bottom: 0; height: 3px; background: #7ab7e8; }
.tapp.vm { background: #636363; box-shadow: inset -5px 0 #555; }
.tapp.vm::after { left: 0; right: 0; }
.tray { display: grid; align-items: center; justify-items: center; font-size: 16px; grid-template-columns: 40px 48px 80px 30px 30px 30px 30px 32px 36px 50px 80px 61px 6px; }
.tray span { white-space: nowrap; }
.tray > span { justify-self: start; }
.tray > .eng { justify-self: center; font-size: 14px; }
.clock { display: flex; flex-direction: column; align-items: center; font-size: 14px; line-height: 24px; }
.notif { position: relative; width: 40px; height: 36px; display: flex; justify-content: center; align-items: flex-start; padding-top: 4px; }
.badge { position: absolute; right: 0; bottom: 0; width: 20px; height: 20px; border-radius: 50%; background: #3d3d3d; border: 1px solid #ccc; font-size: 12px; line-height: 18px; text-align: center; color: #fff; }
.showdesk { display: block; width: 6px; height: 50px; border-left: 1px solid #6a6a6a; }
```
